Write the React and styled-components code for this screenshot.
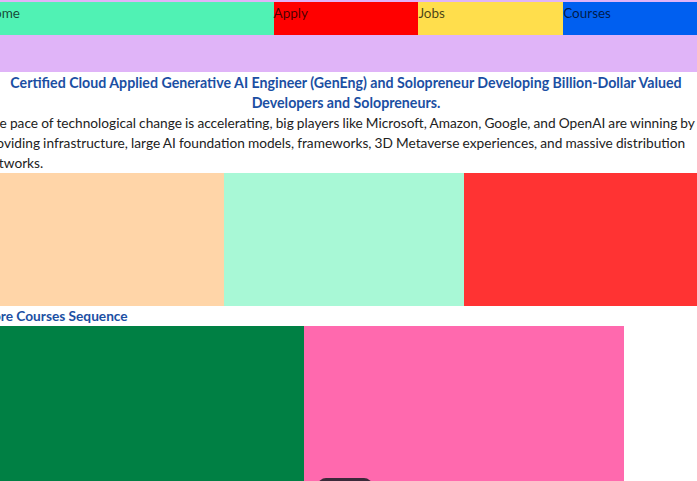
import React from 'react';
import styled, { createGlobalStyle } from 'styled-components';

const GlobalStyle = createGlobalStyle`
  html, body {
    margin: 0;
    padding: 0;
    overflow: hidden;
    background: #fff;
  }
  body {
    font-family: Lato, "Open Sans", sans-serif;
  }
`;

const Page = styled.div`
  width: 724px;
  margin-left: -16px;
`;

const Header = styled.header`
  background-color: #e0b4f8;
  height: 72px;
  padding-top: 2px;
  box-sizing: border-box;
`;

const Nav = styled.nav`
  display: flex;
  height: 33px;
`;

const NavItem = styled.a`
  flex: ${(p) => p.grow || 1};
  background-color: ${(p) => p.bg};
  color: rgba(0, 0, 0, 0.72);
  font-size: 13.5px;
  line-height: 22px;
  text-decoration: none;
`;

const Title = styled.h1`
  margin: 0;
  padding-top: 1px;
  text-align: center;
  color: #1b4fa3;
  font-size: 14.2px;
  font-weight: 700;
  line-height: 20px;
`;

const Intro = styled.p`
  margin: 0;
  color: #222;
  font-size: 13.7px;
  word-spacing: -0.4px;
  line-height: 20px;
`;

const BoxRow = styled.div`
  display: flex;
`;

const Box = styled.div`
  width: ${(p) => p.w}px;
  height: ${(p) => p.h}px;
  background-color: ${(p) => p.bg};
  flex-shrink: 0;
`;

const SectionTitle = styled.h2`
  margin: 0;
  color: #1b4fa3;
  font-size: 13.7px;
  font-weight: 700;
  line-height: 20px;
`;

const FloatingTab = styled.div`
  position: fixed;
  left: 318px;
  top: 478px;
  width: 54px;
  height: 20px;
  border-radius: 8px;
  background-color: #3b2a3a;
`;

const navLinks = [
  { label: 'Home', bg: '#50f2b4', grow: 2 },
  { label: 'Apply', bg: '#ff0000' },
  { label: 'Jobs', bg: '#ffde4c' },
  { label: 'Courses', bg: '#005ff0' },
];

export default function App() {
  return (
    <>
      <GlobalStyle />
      <Page>
        <Header>
          <Nav>
            {navLinks.map((l) => (
              <NavItem key={l.label} href="#" bg={l.bg} grow={l.grow}>
                {l.label}
              </NavItem>
            ))}
          </Nav>
        </Header>
        <Title>
          Certified Cloud Applied Generative AI Engineer (GenEng) and Solopreneur Developing Billion-Dollar Valued
          Developers and Solopreneurs.
        </Title>
        <Intro>
          The pace of technological change is accelerating, big players like Microsoft, Amazon, Google, and OpenAI are
          winning by providing infrastructure, large AI foundation models, frameworks, 3D Metaverse experiences, and
          massive distribution networks.
        </Intro>
        <BoxRow>
          <Box w={240} h={133} bg="#ffd5a8" />
          <Box w={240} h={133} bg="#a8f8d6" />
          <Box w={244} h={133} bg="#ff3333" />
        </BoxRow>
        <SectionTitle>Core Courses Sequence</SectionTitle>
        <BoxRow>
          <Box w={320} h={180} bg="#008044" />
          <Box w={320} h={180} bg="#ff69ae" />
        </BoxRow>
      </Page>
      <FloatingTab />
    </>
  );
}
